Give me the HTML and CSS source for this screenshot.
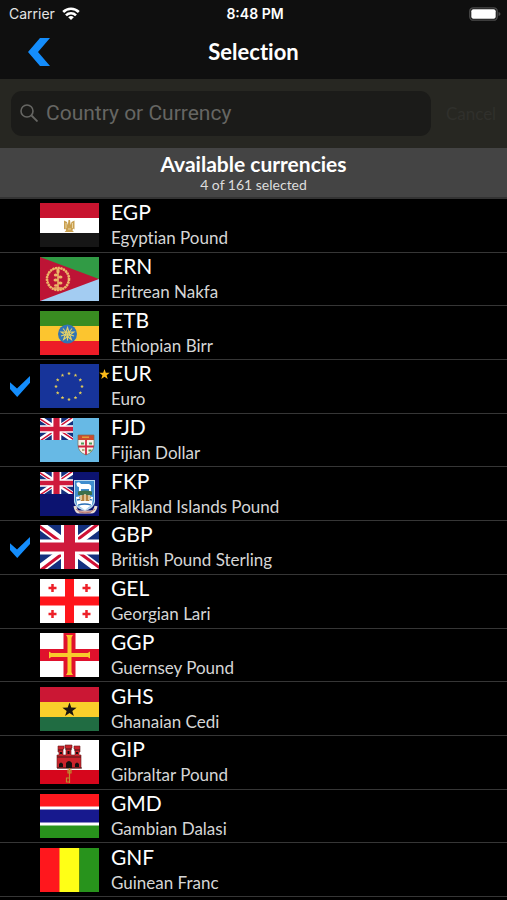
FILE: index.html
```html
<!DOCTYPE html>
<html lang="en">
<head>
<meta charset="utf-8">
<meta name="viewport" content="width=device-width, initial-scale=1">
<title>Selection</title>
<link rel="stylesheet" href="styles.css">
</head>
<body>
<svg class="defs" aria-hidden="true">
  <defs>
    <symbol id="union-jack" viewBox="0 0 59 44" preserveAspectRatio="none">
      <path fill="#14307e" d="M0 0h59v44H0z"/>
      <path stroke="#fff" stroke-width="9" d="M0 0l59 44M59 0L0 44"/>
      <path stroke="#cf1034" stroke-width="3" d="M-1 1l30 22M60 43L30 21M58-1L29 21M1 45l29-22"/>
      <path stroke="#fff" stroke-width="17" d="M29.500 0v44"/>
      <path stroke="#fff" stroke-width="15" d="M0 22h59"/>
      <path stroke="#cf1a3c" stroke-width="11" d="M29.500 0v44"/>
      <path stroke="#cf1a3c" stroke-width="9" d="M0 22h59"/>
    </symbol>
    <symbol id="star" viewBox="-10 -10 20 20">
      <path d="M0-10L2.400-3.200 9.500-3.100 3.800 1.200 5.900 8.100 0 4-5.900 8.100-3.800 1.200-9.500-3.100-2.400-3.200z"/>
    </symbol>
  </defs>
</svg>

<div class="screen">
  <header class="top">
    <div class="status">
      <span class="carrier">Carrier
        <svg class="wifi" viewBox="0 0 18 13" aria-hidden="true"><g fill="none" stroke="#fff" stroke-width="2.600"><path d="M1.200 5a11 11 0 0 1 15.600 0"/><path d="M4 8.300a7 7 0 0 1 10 0"/></g><path fill="#fff" d="M6.200 10.300a4 4 0 0 1 5.600 0L9 13z"/></svg>
      </span>
      <span class="clock">8:48 PM</span>
      <svg class="battery" viewBox="0 0 32 14" aria-hidden="true"><rect x=".8" y=".8" width="27.400" height="12.400" rx="3.500" fill="none" stroke="#4c4c4c" stroke-width="1.300"/><rect x="2.300" y="2.300" width="24.400" height="9.400" rx="2" fill="#fff"/><path fill="#4c4c4c" d="M29.500 5q2 .5 2 2t-2 2z"/></svg>
    </div>
    <nav class="nav">
      <button class="back" type="button" aria-label="Back"><svg viewBox="0 0 22 28" aria-hidden="true"><path fill="#148dfc" d="M0 14L12 0h10L10 14l12 14H12z"/></svg></button>
      <h1>Selection</h1>
    </nav>
  </header>

  <form class="search">
    <div class="field">
      <svg viewBox="0 0 18 18" aria-hidden="true"><circle cx="7" cy="7" r="6" fill="none" stroke="#666663" stroke-width="1.600"/><path d="M11.500 11.500l6 6" stroke="#666663" stroke-width="1.800"/></svg>
      <input type="text" aria-label="Country or Currency" placeholder="Country or Currency">
    </div>
    <button class="cancel" type="button">Cancel</button>
  </form>

  <div class="section">
    <h2>Available currencies</h2>
    <p>4 of 161 selected</p>
  </div>

  <ul class="list">
    <li><label class="row"><input type="checkbox">
      <svg class="flag" viewBox="0 0 59 44" aria-hidden="true"><path fill="#c8142f" d="M0 0h59v15H0z"/><path fill="#fff" d="M0 15h59v15H0z"/><path fill="#161616" d="M0 30h59v14H0z"/><g fill="#c9a050"><path d="M24 17.500l3 1.500.800 3 .7-5h1.500l.7 5 .8-3 3-1.500v9l-1.500-1-.5 2 1.500 1.500h-9.500l1.500-1.500-.5-2-1.500 1z"/></g><path stroke="#f3e2b8" stroke-width=".8" d="M26 20v5M32.500 20v5M28 26h3"/></svg>
      <span class="text"><strong>EGP</strong><span>Egyptian Pound</span></span></label></li>
    <li><label class="row"><input type="checkbox">
      <svg class="flag" viewBox="0 0 59 44" aria-hidden="true"><path fill="#319b45" d="M0 0h59v22H0z"/><path fill="#a3ccf2" d="M0 22h59v22H0z"/><path fill="#bd1435" d="M0 0l59 22L0 44z"/><circle cx="18" cy="22" r="11" fill="none" stroke="#edb668" stroke-width="2.600" stroke-dasharray="2 .7"/><circle cx="18" cy="22" r="11" fill="none" stroke="#edb668"/><path stroke="#edb668" stroke-width="1.600" fill="none" d="M18 13v19M14 31h8"/><g fill="#edb668"><ellipse cx="18" cy="14" rx="1.700" ry="2.500"/><ellipse cx="15.800" cy="18" rx="2" ry="1.500"/><ellipse cx="20.300" cy="20" rx="2.200" ry="1.500"/><ellipse cx="15.700" cy="23" rx="2.200" ry="1.500"/><ellipse cx="20.300" cy="26" rx="2.200" ry="1.500"/><ellipse cx="16" cy="28.500" rx="2" ry="1.300"/></g></svg>
      <span class="text"><strong>ERN</strong><span>Eritrean Nakfa</span></span></label></li>
    <li><label class="row"><input type="checkbox">
      <svg class="flag" viewBox="0 0 59 44" aria-hidden="true"><path fill="#398c21" d="M0 0h59v15H0z"/><path fill="#fcc52f" d="M0 15h59v15H0z"/><path fill="#ed1c27" d="M0 30h59v14H0z"/><circle cx="27.500" cy="23" r="9.500" fill="#3274b5"/><g fill="none" stroke="#e4d268" stroke-width="1.100"><path d="M27.500 16.500l3.900 12-10.200-7.400h12.600l-10.200 7.400z"/><path d="M27.500 23l4.500-5.500M27.500 23l6.500 2M27.500 23v6.500M27.500 23l-6.500 2M27.500 23L23 17.500"/></g></svg>
      <span class="text"><strong>ETB</strong><span>Ethiopian Birr</span></span></label></li>
    <li><label class="row"><input type="checkbox" checked>
      <svg class="flag" viewBox="0 0 59 44" aria-hidden="true"><path fill="#17349a" d="M0 0h59v44H0z"/><g fill="#e8cf56"><use href="#star" x="27" y="7.500" width="4" height="4"/><use href="#star" x="33.500" y="9.300" width="4" height="4"/><use href="#star" x="38.300" y="14" width="4" height="4"/><use href="#star" x="40" y="20.500" width="4" height="4"/><use href="#star" x="38.300" y="27" width="4" height="4"/><use href="#star" x="33.500" y="31.700" width="4" height="4"/><use href="#star" x="27" y="33.500" width="4" height="4"/><use href="#star" x="20.500" y="31.700" width="4" height="4"/><use href="#star" x="15.700" y="27" width="4" height="4"/><use href="#star" x="14" y="20.500" width="4" height="4"/><use href="#star" x="15.700" y="14" width="4" height="4"/><use href="#star" x="20.500" y="9.300" width="4" height="4"/></g></svg>
      <svg class="favorite" aria-hidden="true"><use href="#star"/></svg>
      <span class="text"><strong>EUR</strong><span>Euro</span></span></label></li>
    <li><label class="row"><input type="checkbox">
      <svg class="flag" viewBox="0 0 59 44" aria-hidden="true"><path fill="#67b9e5" d="M0 0h59v44H0z"/><use href="#union-jack" width="33" height="22"/><path fill="#f6f2e8" d="M38 17h16v10q0 7-8 10-8-3-8-10z"/><path fill="#cf4a2c" d="M38 17h16v5H38z"/><path fill="#e0a03a" d="M42 18.500h7v1.500h-7z"/><path stroke="#cf2440" stroke-width="1.800" d="M46 22v15M38 28.500h16"/><path stroke="#4f9a58" stroke-width="2" d="M41 25.500h3M49 25.500h3M48.500 32.500h3"/><path stroke="#9a8f58" stroke-width="1.500" d="M42 32h2.500"/><path fill="none" stroke="#7b6f54" stroke-width=".7" d="M38 17h16v10q0 7-8 10-8-3-8-10z"/></svg>
      <span class="text"><strong>FJD</strong><span>Fijian Dollar</span></span></label></li>
    <li><label class="row"><input type="checkbox">
      <svg class="flag" viewBox="0 0 59 44" aria-hidden="true"><path fill="#0c1370" d="M0 0h59v44H0z"/><use href="#union-jack" width="33" height="22"/><path fill="#b9d8ee" d="M34 8h21v22q-1 6-10 9-10-3-11-9z"/><path fill="#3f8dce" d="M35 9h19v20q-1 6-9 8-9-2-10-8z"/><path fill="#fff" d="M36.500 11q3-2 4.500 1h8q3 1 2 4v3.500h-2V17h-8v2.500h-2V15q-2.500 0-2.500-4z"/><path fill="#3d704a" d="M38 19.500q7-2 14 0V23H38z"/><path fill="#fff" d="M36 25q8-2 17 0l-1 8-7 5-8-5z"/><path stroke="#2a6fb5" stroke-width="1.300" d="M37 28q8-2 15 0M38 33q7-2 13 0" fill="none"/><path fill="#b5813f" d="M39 25q6-5 12 0l-2 4h-8z"/><path stroke="#f4e6c0" stroke-width="1.300" d="M41 23v5M45 22v7M49 23v5"/><path fill="none" stroke="#e8dbd2" stroke-width="3" d="M35 34q1 6 4 6h12q4 0 5-6"/><path fill="none" stroke="#b87771" d="M36 37q3 4 9 4t10-4M39 40h12"/></svg>
      <span class="text"><strong>FKP</strong><span>Falkland Islands Pound</span></span></label></li>
    <li><label class="row"><input type="checkbox" checked>
      <svg class="flag" viewBox="0 0 59 44" aria-hidden="true"><use href="#union-jack" width="59" height="44"/></svg>
      <span class="text"><strong>GBP</strong><span>British Pound Sterling</span></span></label></li>
    <li><label class="row"><input type="checkbox">
      <svg class="flag" viewBox="0 0 59 44" aria-hidden="true"><path fill="#fff" d="M0 0h59v44H0z"/><path stroke="#ff151b" stroke-width="9" d="M29.500 0v44M0 22h59"/><path stroke="#ed2028" stroke-width="2.500" d="M12.500 5v8M8.500 9h8M46.500 5v8M42.500 9h8M12.500 31v8M8.500 35h8M46.500 31v8M42.500 35h8"/></svg>
      <span class="text"><strong>GEL</strong><span>Georgian Lari</span></span></label></li>
    <li><label class="row"><input type="checkbox">
      <svg class="flag" viewBox="0 0 59 44" aria-hidden="true"><path fill="#fff" d="M0 0h59v44H0z"/><path stroke="#e0112c" stroke-width="12" d="M29.500 0v44M0 22h59"/><path stroke="#f8cb2c" stroke-width="4" d="M29.500 3v38M10 22h39"/><path fill="#f8cb2c" d="M26 2h7l-2 3h-3zM26 42h7l-2-3h-3zM9 18.500v7l3-2v-3zM50 18.500v7l-3-2v-3z"/></svg>
      <span class="text"><strong>GGP</strong><span>Guernsey Pound</span></span></label></li>
    <li><label class="row"><input type="checkbox">
      <svg class="flag" viewBox="0 0 59 44" aria-hidden="true"><path fill="#cb1734" d="M0 0h59v15H0z"/><path fill="#f9cf2b" d="M0 15h59v15H0z"/><path fill="#206c42" d="M0 30h59v14H0z"/><use href="#star" x="22" y="15.500" width="15" height="15" fill="#181510"/></svg>
      <span class="text"><strong>GHS</strong><span>Ghanaian Cedi</span></span></label></li>
    <li><label class="row"><input type="checkbox">
      <svg class="flag" viewBox="0 0 59 44" aria-hidden="true"><path fill="#fff" d="M0 0h59v30H0z"/><path fill="#d6061c" d="M0 30h59v14H0z"/><path fill="#c9232b" stroke="#641b1d" stroke-width=".6" d="M17 28V15h2v-3h-1V6h6v3h-1v6h3V8h-1V5h7v3h-1v7h4V9h-1V6h6v6h-1v3h2v13z"/><path stroke="#4d1719" stroke-width="1" d="M17 17h24M18 10h5M25 9h7M34 10h6M17 28h25"/><path fill="#161010" d="M19 27v-3q2-3 4 0v3zM26 28v-5q3-4 6 0v5zM35 27v-3q2-3 4 0v3zM20 14v-2h2v2zM27.500 14v-3h2v3zM36 14v-2h2v2z"/><path fill="none" stroke="#bd8b2e" stroke-width="1.200" d="M29.500 28v15M29 38h-2.500v4H29M28 30h3v3h-3z"/></svg>
      <span class="text"><strong>GIP</strong><span>Gibraltar Pound</span></span></label></li>
    <li><label class="row"><input type="checkbox">
      <svg class="flag" viewBox="0 0 59 44" aria-hidden="true"><path fill="#fff" d="M0 0h59v44H0z"/><path fill="#ff181e" d="M0 0h59v12.500H0z"/><path fill="#17198e" d="M0 15.500h59v13H0z"/><path fill="#28931c" d="M0 31.500h59V44H0z"/></svg>
      <span class="text"><strong>GMD</strong><span>Gambian Dalasi</span></span></label></li>
    <li><label class="row"><input type="checkbox">
      <svg class="flag" viewBox="0 0 59 44" aria-hidden="true"><path fill="#ff171d" d="M0 0h20v44H0z"/><path fill="#ffff16" d="M19.500 0h20v44h-20z"/><path fill="#28931c" d="M39.500 0H59v44H39.500z"/></svg>
      <span class="text"><strong>GNF</strong><span>Guinean Franc</span></span></label></li>
  </ul>
</div>
</body>
</html>
```
FILE: styles.css
```css
* {
  box-sizing: border-box;
}

body {
  margin: 0;
  background: #000;
  color: #fff;
  font-family: Lato, "Open Sans", sans-serif;
  font-variant-ligatures: none;
}

h1,
h2,
p,
ul {
  margin: 0;
  padding: 0;
}

button {
  padding: 0;
  border: 0;
  background: none;
}

.defs {
  position: absolute;
  width: 0;
  height: 0;
}

.screen {
  display: flex;
  flex-direction: column;
  min-height: 100vh;
}

.top {
  background: #0f0f0f;
}

.status {
  display: grid;
  grid-template-columns: 1fr auto 1fr;
  align-items: center;
  height: 27px;
  padding: 0 6px 0 9px;
  font: 14px/20px Inter, sans-serif;
}

.carrier {
  display: flex;
  align-items: center;
  gap: 7px;
  color: #e4e4e4;
}

.wifi {
  width: 18px;
  height: 13px;
}

.clock {
  font-weight: 600;
}

.battery {
  width: 32px;
  height: 14px;
  justify-self: end;
}

.nav {
  display: grid;
  grid-template-columns: 1fr auto 1fr;
  align-items: center;
  height: 52px;
  padding: 0 28px 2px;
}

.back {
  display: block;
  width: 22px;
  height: 28px;
}

.back svg {
  display: block;
  width: 22px;
  height: 28px;
}

.nav h1 {
  font-size: 22px;
  line-height: 28px;
}

.search {
  display: flex;
  gap: 14px;
  padding: 12px 10px 12px 11px;
  background: #272722;
}

.field {
  display: flex;
  flex: 1;
  align-items: center;
  gap: 8px;
  height: 45px;
  padding: 0 9px 2px;
  border-radius: 11px;
  background: #1b1b19;
}

.field svg {
  width: 18px;
  height: 18px;
}

.field input {
  flex: 1;
  min-width: 0;
  padding: 0;
  border: 0;
  outline: 0;
  background: none;
  color: #fff;
  font: 21px/28px Roboto, sans-serif;
}

.field input::placeholder {
  color: #666663;
  opacity: 1;
}

.cancel {
  width: 52px;
  color: #30302c;
  font: 17px/24px Lato, sans-serif;
}

.section {
  padding: 3px 0 4px;
  border-bottom: 2px solid #333;
  background: #444;
  text-align: center;
}

.section h2 {
  font-size: 21px;
  line-height: 26px;
}

.section p {
  color: #ddd;
  font-size: 14px;
  line-height: 16px;
}

.list {
  display: grid;
  flex: 1;
  grid-auto-rows: 1fr;
  padding-bottom: 3px;
  list-style: none;
}

.row {
  position: relative;
  display: grid;
  grid-template-columns: 20px 59px 1fr;
  align-items: center;
  height: 100%;
  padding-left: 10px;
  border-bottom: 1px solid #363636;
}

.row input {
  width: 20px;
  height: 21px;
  margin: 0;
  appearance: none;
}

.row input:checked {
  background: #148dfc;
  clip-path: polygon(0 30%, 35% 60%, 100% 0, 100% 33%, 36% 100%, 0 62%);
}

.flag {
  width: 59px;
  height: 44px;
  margin-left: 10px;
}

.favorite {
  position: absolute;
  top: 9px;
  left: 99px;
  width: 11px;
  height: 11px;
  fill: #fdbb18;
}

.text {
  display: flex;
  flex-direction: column;
  padding-left: 22px;
}

.text strong {
  font-size: 21px;
  font-weight: 400;
  line-height: 26px;
}

.text span {
  color: #d6d6d6;
  font-size: 17px;
  line-height: 26px;
}
```
